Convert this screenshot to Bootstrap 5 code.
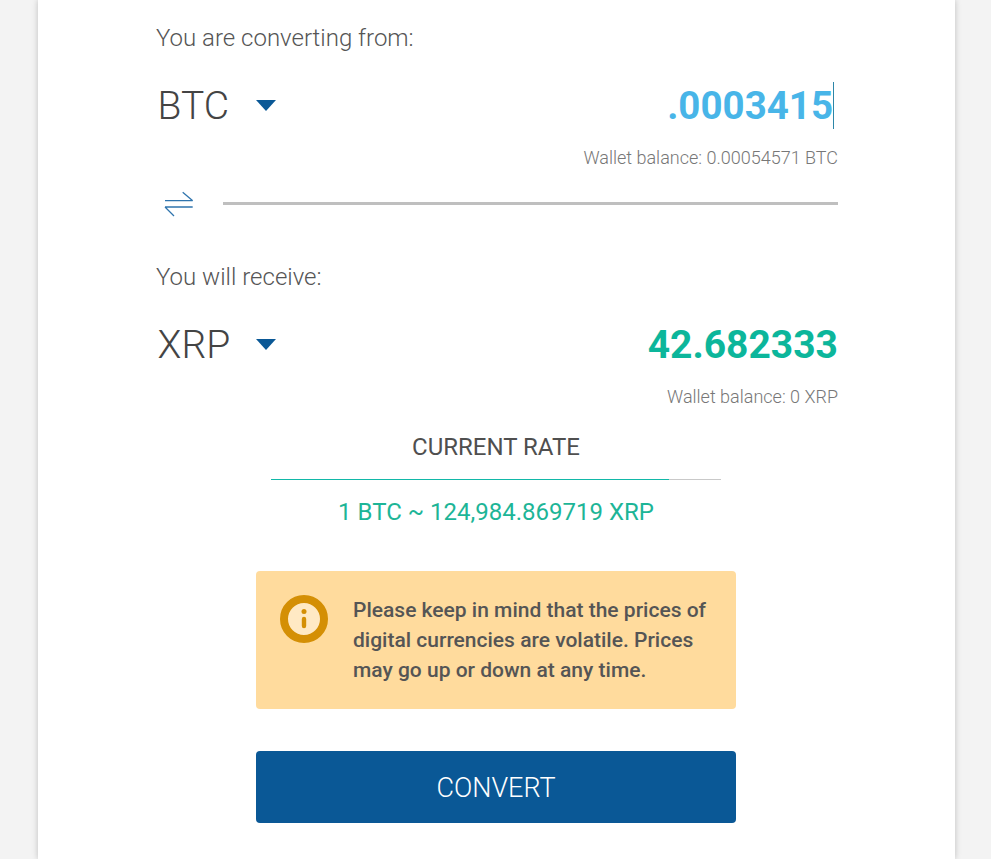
<!DOCTYPE html>
<html lang="en">
<head>
<meta charset="utf-8">
<title>Convert</title>
<link href="https://cdn.jsdelivr.net/npm/bootstrap@5.3.0/dist/css/bootstrap.min.css" rel="stylesheet">
<style>
html,body{height:100%;overflow:hidden}
body{background:#f3f3f3;font-family:Roboto,"Liberation Sans",sans-serif;color:#4f4f4f}
.sheet{width:917px;height:859px;margin-left:38px;background:#fff;box-shadow:0 0 6px rgba(0,0,0,.22);padding:24px 117px 0 118px}
.prompt{font-size:24px;font-weight:300;line-height:28px;color:#555;margin:0}
.prompt-second{margin-top:45px}
.pair-row{height:46px;margin-top:30px}
.coin{font-size:39px;font-weight:300;line-height:46px;color:#444;width:100px;padding:2px 0 0 1.500px}
.caret-mark{width:0;height:0;border-left:10px solid transparent;border-right:10px solid transparent;border-top:11px solid #0a5896}
.amount{font-weight:700;line-height:46px}
.amount-from{font-size:38.500px;color:#48b5e8;border-right:1px solid #2d86a8;margin-right:4px;height:47px;padding-top:1px}
.amount-to{font-size:39px;color:#0cb69b;padding-top:2px}
.balance{font-size:18px;font-weight:300;line-height:24px;color:#777;text-align:right;margin-top:18px}
.swap-row{height:30px;margin-top:18px}
.swap-rule{flex:1;height:3px;background:#bfbfbf;margin-left:22px}
.centered{padding-right:2px}
.rate-box{width:450px;margin-top:24px}
.rate-title{font-size:24px;font-weight:400;line-height:28px;color:#4f4f4f}
.rate-track{height:1px;background:linear-gradient(to right,#12b8a8 88.4%,#c9c9c9 88.4%);margin-top:18px}
.rate-value{font-size:24px;font-weight:400;line-height:28px;color:#1db597;margin-top:18px}
.notice{width:480px;height:138px;background:#ffdb9d;border-radius:4px;padding:24px 24px 0 24px;margin-top:45px}
.notice-text{font-size:21px;font-weight:500;line-height:30px;color:#555;margin:0 0 0 25px}
.go-row{margin-top:42px}
.go-btn{width:480px;height:72px;background:#0a5896;border:0;border-radius:4px;color:#fff;font-size:27px;font-weight:300;padding-top:8px;padding-bottom:6px}
.go-btn:hover{background:#0a5896;color:#fff}
</style>
</head>
<body>
<div class="sheet">
  <p class="prompt">You are converting from:</p>
  <div class="pair-row d-flex align-items-center">
    <div class="coin">BTC</div>
    <div class="caret-mark"></div>
    <div class="amount amount-from ms-auto">.0003415</div>
  </div>
  <div class="balance">Wallet balance: 0.00054571 BTC</div>
  <div class="swap-row d-flex align-items-center">
    <svg width="45" height="30" viewBox="0 0 45 30" fill="none" stroke="#2f74ad" stroke-width="1.300"><path d="M9 12.700H36.700M26.700 4.300L36.700 12.700"/><path d="M9 19H36.700M9 19L18 28"/></svg>
    <div class="swap-rule"></div>
  </div>
  <p class="prompt prompt-second">You will receive:</p>
  <div class="pair-row d-flex align-items-center">
    <div class="coin">XRP</div>
    <div class="caret-mark"></div>
    <div class="amount amount-to ms-auto">42.682333</div>
  </div>
  <div class="balance">Wallet balance: 0 XRP</div>
  <div class="centered">
    <div class="rate-box mx-auto text-center">
      <div class="rate-title">CURRENT RATE</div>
      <div class="rate-track"></div>
      <div class="rate-value">1 BTC ~ 124,984.869719 XRP</div>
    </div>
    <div class="notice d-flex mx-auto">
      <svg class="flex-shrink-0" width="48" height="48" viewBox="0 0 48 48"><circle cx="24" cy="24" r="20" fill="#ffe9c4" stroke="#d48f05" stroke-width="8"/><circle cx="24" cy="16.500" r="2.500" fill="#d48f05"/><rect x="21.800" y="21.700" width="4.400" height="11.600" rx="2.200" fill="#d48f05"/></svg>
      <p class="notice-text">Please keep in mind that the prices of digital currencies are volatile. Prices may go up or down at any time.</p>
    </div>
    <div class="go-row text-center"><button class="btn go-btn" type="button">CONVERT</button></div>
  </div>
</div>
<script src="https://cdn.jsdelivr.net/npm/bootstrap@5.3.0/dist/js/bootstrap.bundle.min.js"></script>
</body>
</html>
